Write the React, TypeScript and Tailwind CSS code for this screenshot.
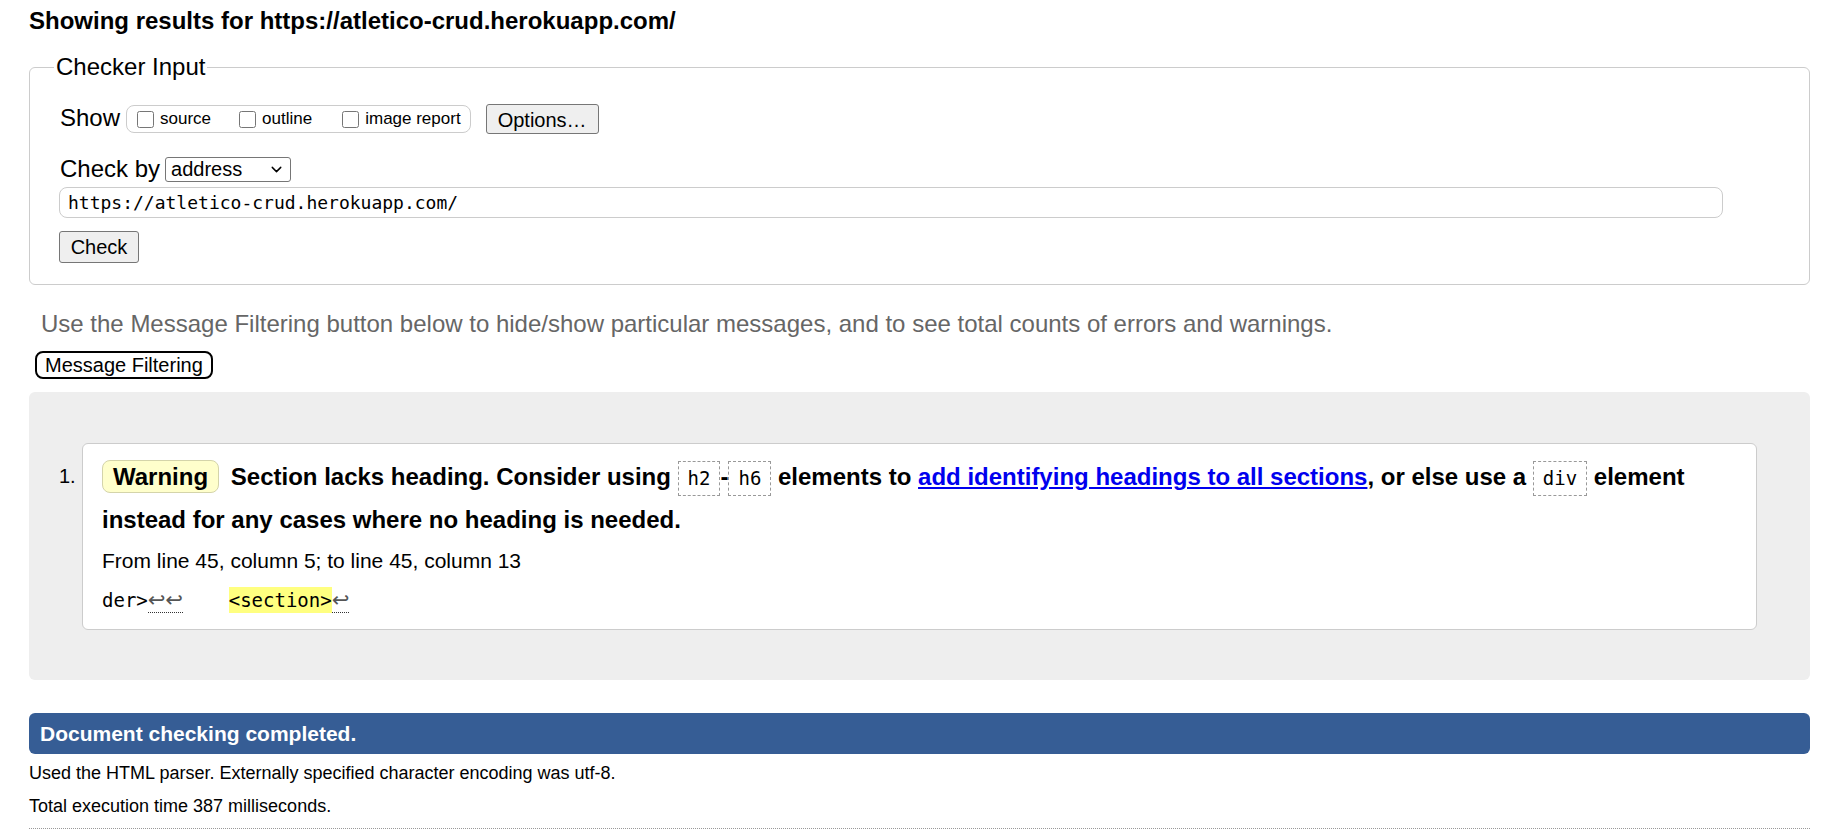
import { ChevronDown } from "lucide-react";

const Code = ({ children }: { children: string }) => (
  <span className="inline-block border border-dashed border-[#999] bg-white px-[9px] font-['DejaVu_Sans_Mono',monospace] text-[19px] font-normal leading-[33px]">
    {children}
  </span>
);

const Lf = ({ n }: { n: number }) => (
  <span className="border-b border-dotted border-[#333] font-['DejaVu_Sans',sans-serif] text-[21px] leading-[20px] text-[#555]">
    {"↩".repeat(n)}
  </span>
);

const App = () => {
  return (
    <div className="min-h-[832px] bg-white pl-[29px] pr-[23px] font-['Liberation_Sans',Arial,sans-serif] text-black">
      <h2 className="pt-[7px] text-[24px] font-bold leading-[28px]">
        Showing results for https://atletico-crud.herokuapp.com/
      </h2>

      <fieldset className="mt-[18px] rounded-[6px] border border-[#ccc]">
        <legend className="ml-[24px] px-[2px] text-[24px] leading-[28px]">Checker Input</legend>
        <div className="px-[29px] pb-[21px]">
          <div className="mt-[23px] flex h-[30px] items-center">
            <span className="-mt-[2px] ml-[1px] text-[24px] leading-[28px]">Show</span>
            <div className="ml-[6px] flex h-[28px] items-center rounded-[8px] border border-[#ccc] pl-[10px] pr-[9px] text-[17px]">
              <label className="mr-[28px] flex items-center gap-[6px]">
                <input type="checkbox" className="m-0 h-[17px] w-[17px]" />
                source
              </label>
              <label className="mr-[30px] flex items-center gap-[6px]">
                <input type="checkbox" className="m-0 h-[17px] w-[17px]" />
                outline
              </label>
              <label className="flex items-center gap-[6px]">
                <input type="checkbox" className="m-0 h-[17px] w-[17px]" />
                image report
              </label>
            </div>
            <button className="ml-[15px] h-[30px] w-[113px] rounded-[3px] border border-[#767676] bg-[#efefef] text-[20px]">
              Options…
            </button>
          </div>

          <div className="mt-[21px] flex h-[28px] items-center">
            <span className="ml-[1px] text-[24px] leading-[28px]">Check by</span>
            <div className="ml-[5px] flex h-[25px] w-[126px] items-center justify-between rounded-[3px] border border-[#767676] pl-[5px] pr-[5px] text-[20px]">
              address
              <ChevronDown size={17} strokeWidth={2} />
            </div>
          </div>

          <input
            readOnly
            defaultValue="https://atletico-crud.herokuapp.com/"
            className="mt-[4px] block h-[31px] w-[1664px] rounded-[8px] border border-[#ccc] pl-[8px] font-['DejaVu_Sans_Mono',monospace] text-[18px] outline-none"
          />

          <button className="mt-[13px] block h-[32px] w-[80px] rounded-[3px] border border-[#767676] bg-[#efefef] text-[20px]">
            Check
          </button>
        </div>
      </fieldset>

      <p className="mt-[25px] pl-[12px] text-[24px] leading-[28px] text-[#666]">
        Use the Message Filtering button below to hide/show particular messages, and to see total counts of errors and warnings.
      </p>
      <button className="ml-[6px] mt-[13px] block h-[28px] rounded-[8px] border-2 border-black bg-white px-[8px] text-[20px] leading-none">
        Message Filtering
      </button>

      <div className="mt-[13px] flex rounded-[6px] bg-[#eee] pb-[50px] pl-[30px] pr-[53px] pt-[51px]">
        <span className="w-[23px] shrink-0 pt-[12px] text-[20px] leading-[43px]">1.</span>
        <div className="flex-1 rounded-[6px] border border-[#ccc] bg-white pb-[14px] pl-[19px] pr-[19px] pt-[11px]">
          <p className="text-[24px] font-bold leading-[43px]">
            <span className="mr-[5px] inline-block rounded-[8px] border border-[#d4d4aa] bg-[#ffffcc] px-[10px] leading-[31px]">
              Warning
            </span>{" "}
            Section lacks heading. Consider using <Code>h2</Code>-<Code>h6</Code> elements to{" "}
            <a href="#" className="text-[#00e] underline">
              add identifying headings to all sections
            </a>
            , or else use a <Code>div</Code> element instead for any cases where no heading is needed.
          </p>
          <p className="mt-[5px] text-[21px] leading-[30px]">From line 45, column 5; to line 45, column 13</p>
          <p className="mt-[9px] whitespace-pre font-['DejaVu_Sans_Mono',monospace] text-[19px] leading-[30px]">
            {"der>"}
            <Lf n={2} />
            {"    "}
            <span className="bg-[#ffff80] py-[2px]">{"<section>"}</span>
            <Lf n={1} />
          </p>
        </div>
      </div>

      <div className="mt-[33px] flex h-[41px] items-center rounded-[6px] bg-[#365d95] pl-[11px] text-[21px] font-bold text-white">
        Document checking completed.
      </div>
      <p className="mt-[3px] text-[18px] leading-[33px]">
        Used the HTML parser. Externally specified character encoding was utf-8.
      </p>
      <p className="text-[18px] leading-[33px]">Total execution time 387 milliseconds.</p>
      <div className="mt-[5px] border-t border-dotted border-[#999]" />
    </div>
  );
};

export default App;
